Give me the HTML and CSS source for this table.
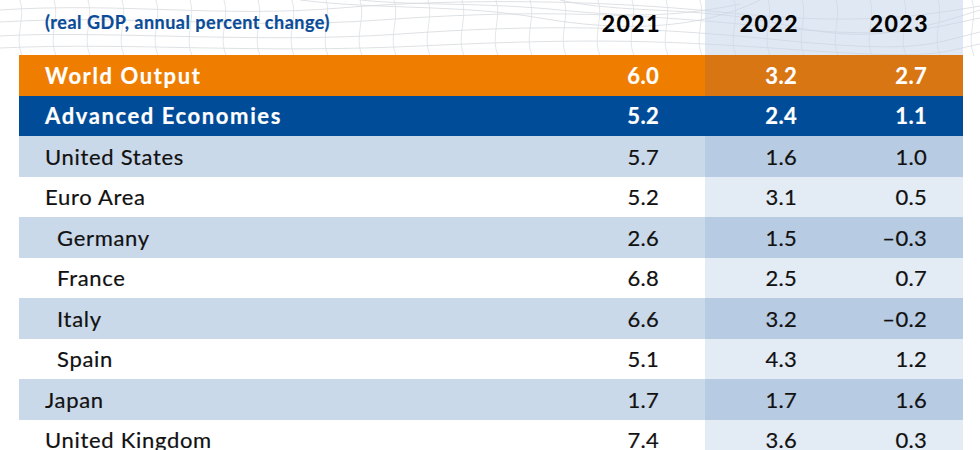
FILE: index.html
```html
<!DOCTYPE html>
<html lang="en">
<head>
<meta charset="utf-8">
<title>World Economic Outlook growth projections</title>
<link rel="stylesheet" href="styles.css">
</head>
<body>
<div class="page">
  <svg class="mesh" width="980" height="56" viewBox="0 0 980 56" aria-hidden="true">
    <g fill="none" stroke="#d6d9dd" stroke-width="0.8">
      <path d="M0 10 C120 2 220 18 340 8 S600 0 720 12 S900 20 980 6"/>
      <path d="M0 22 C140 14 240 30 380 20 S620 12 760 26 S920 30 980 18"/>
      <path d="M0 36 C100 30 260 44 400 34 S640 26 780 40 S930 44 980 32"/>
      <path d="M0 48 C130 42 250 54 420 46 S660 40 800 50 S940 52 980 44"/>
      <path d="M300 0 C380 10 460 4 540 18 S700 30 760 0"/>
      <path d="M560 0 C620 14 700 6 780 24 S900 36 980 10"/>
      <path d="M360 0 C420 6 480 2 560 10 S680 16 740 4"/>
    </g>
    <g fill="none" stroke="#dcdfe3" stroke-width="0.8">
      <path d="M20 0 C26 18 14 36 22 56"/>
      <path d="M54 0 C60 18 48 36 56 56"/>
      <path d="M88 0 C94 18 82 36 90 56"/>
      <path d="M122 0 C128 18 116 36 124 56"/>
      <path d="M156 0 C162 18 150 36 158 56"/>
      <path d="M190 0 C196 18 184 36 192 56"/>
      <path d="M224 0 C230 18 218 36 226 56"/>
      <path d="M258 0 C264 18 252 36 260 56"/>
      <path d="M292 0 C298 18 286 36 294 56"/>
      <path d="M326 0 C332 18 320 36 328 56"/>
      <path d="M360 0 C366 18 354 36 362 56"/>
      <path d="M394 0 C400 18 388 36 396 56"/>
      <path d="M428 0 C434 18 422 36 430 56"/>
      <path d="M462 0 C468 18 456 36 464 56"/>
      <path d="M496 0 C502 18 490 36 498 56"/>
      <path d="M530 0 C536 18 524 36 532 56"/>
      <path d="M564 0 C570 18 558 36 566 56"/>
      <path d="M598 0 C604 18 592 36 600 56"/>
      <path d="M632 0 C638 18 626 36 634 56"/>
      <path d="M666 0 C672 18 660 36 668 56"/>
      <path d="M700 0 C706 18 694 36 702 56"/>
      <path d="M734 0 C740 18 728 36 736 56"/>
      <path d="M768 0 C774 18 762 36 770 56"/>
      <path d="M802 0 C808 18 796 36 804 56"/>
      <path d="M836 0 C842 18 830 36 838 56"/>
      <path d="M870 0 C876 18 864 36 872 56"/>
      <path d="M904 0 C910 18 898 36 906 56"/>
      <path d="M938 0 C944 18 932 36 940 56"/>
      <path d="M972 0 C978 18 966 36 974 56"/>
    </g>
  </svg>

  <div class="table">
    <div class="row head">
      <div class="label cap">(real GDP, annual percent change)</div>
      <div class="num c1">2021</div>
      <div class="num c2">2022</div>
      <div class="num c3">2023</div>
    </div>
    <div class="row world">
      <div class="label">World Output</div>
      <div class="num c1">6.0</div>
      <div class="num c2">3.2</div>
      <div class="num c3">2.7</div>
    </div>
    <div class="row adv">
      <div class="label">Advanced Economies</div>
      <div class="num c1">5.2</div>
      <div class="num c2">2.4</div>
      <div class="num c3">1.1</div>
    </div>
    <div class="row tint">
      <div class="label">United States</div>
      <div class="num c1">5.7</div>
      <div class="num c2">1.6</div>
      <div class="num c3">1.0</div>
    </div>
    <div class="row plain">
      <div class="label">Euro Area</div>
      <div class="num c1">5.2</div>
      <div class="num c2">3.1</div>
      <div class="num c3">0.5</div>
    </div>
    <div class="row tint sub">
      <div class="label">Germany</div>
      <div class="num c1">2.6</div>
      <div class="num c2">1.5</div>
      <div class="num c3">–0.3</div>
    </div>
    <div class="row plain sub">
      <div class="label">France</div>
      <div class="num c1">6.8</div>
      <div class="num c2">2.5</div>
      <div class="num c3">0.7</div>
    </div>
    <div class="row tint sub">
      <div class="label">Italy</div>
      <div class="num c1">6.6</div>
      <div class="num c2">3.2</div>
      <div class="num c3">–0.2</div>
    </div>
    <div class="row plain sub">
      <div class="label">Spain</div>
      <div class="num c1">5.1</div>
      <div class="num c2">4.3</div>
      <div class="num c3">1.2</div>
    </div>
    <div class="row tint">
      <div class="label">Japan</div>
      <div class="num c1">1.7</div>
      <div class="num c2">1.7</div>
      <div class="num c3">1.6</div>
    </div>
    <div class="row plain">
      <div class="label">United Kingdom</div>
      <div class="num c1">7.4</div>
      <div class="num c2">3.6</div>
      <div class="num c3">0.3</div>
    </div>
  </div>
</div>
</body>
</html>
```

FILE: styles.css
```css
html, body {
  margin: 0;
  padding: 0;
  background: #ffffff;
  overflow: hidden;
}

.page {
  position: relative;
  width: 980px;
  height: 450px;
  padding-left: 19px;
  box-sizing: border-box;
  font-family: "Lato", "Open Sans", sans-serif;
  color: #111111;
}

.mesh {
  position: absolute;
  left: 0;
  top: 0;
  z-index: 0;
}

.table {
  position: relative;
  z-index: 1;
  width: 944px;
  display: flex;
  flex-direction: column;
}

.row {
  display: grid;
  grid-template-columns: 541px 145px 128px 130px;
  height: 40.5px;
  align-items: stretch;
  font-size: 22px;
}

.row > div {
  display: flex;
  align-items: center;
  white-space: nowrap;
}

.label {
  padding-left: 26px;
  letter-spacing: 0.7px;
  -webkit-text-stroke: 0.2px currentColor;
}

.sub .label {
  padding-left: 38px;
}

.num {
  justify-content: flex-end;
  letter-spacing: 0.3px;
  -webkit-text-stroke: 0.2px currentColor;
}

.c1 { padding-right: 46px; }
.c2 { padding-right: 36px; }
.c3 { padding-right: 36px; }

/* header */
.head {
  height: 55px;
  font-weight: 700;
}

.head .cap {
  color: #0b4c98;
  font-size: 18px;
  letter-spacing: 0.5px;
  padding-bottom: 12px;
}

.head .num {
  font-size: 23px;
  letter-spacing: 1.5px;
  color: #000;
  padding-bottom: 9px;
}

.head .c1 { padding-right: 44px; }
.head .c2, .head .c3 { padding-right: 34px; }

.head .c2, .head .c3 {
  background: rgba(198, 213, 233, 0.55);
}

/* highlight rows */
.world, .adv {
  color: #ffffff;
  font-weight: 700;
}

.world .label, .adv .label {
  letter-spacing: 1.6px;
}

.world { background: #ef7d00; }
.world .c2, .world .c3 { background: #d97614; }

.adv { background: #004c98; }

.tint { background: #cad9e9; }
.tint .c2, .tint .c3 { background: #b7cbe3; }

.plain { background: #ffffff; }
.plain .c2, .plain .c3 { background: #e3ebf4; }
```
